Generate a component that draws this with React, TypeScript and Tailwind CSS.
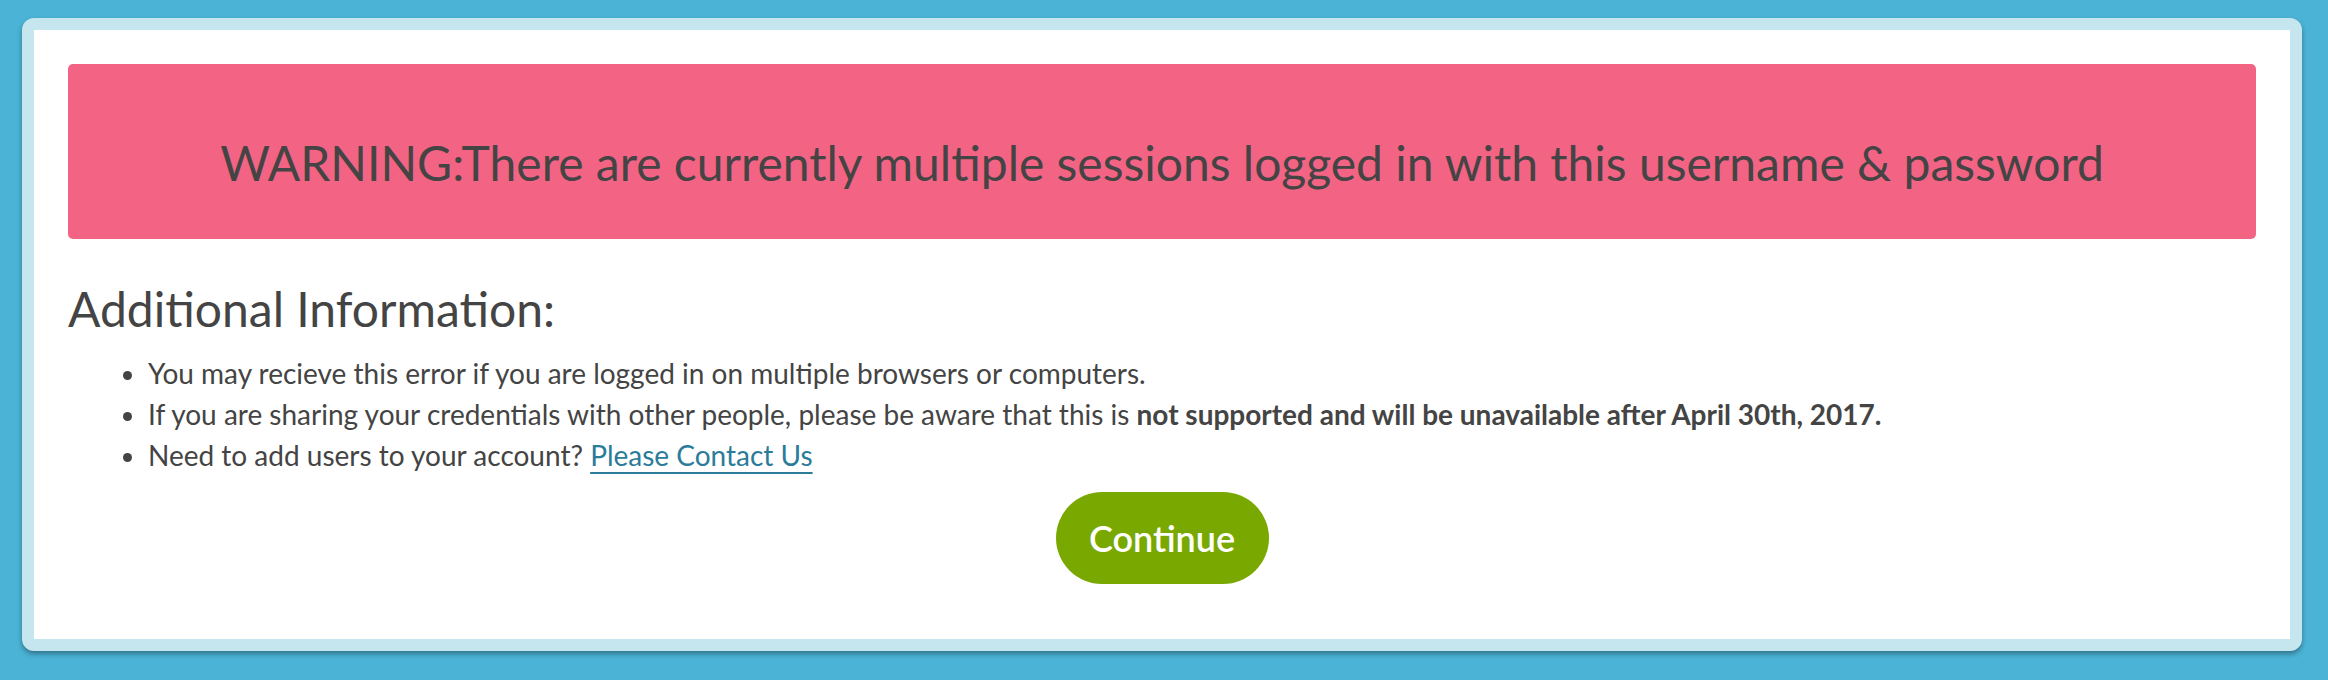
import React from "react";

export default function App() {
  return (
    <div
      className="h-[680px] w-full bg-[#4bb3d6] pt-[18px] pl-[22px] pr-[26px] pb-[29px] flex"
      style={{ fontFamily: "Lato, 'Liberation Sans', sans-serif" }}
    >
      <div className="flex-1 rounded-[12px] border-[12px] border-[#c6e6ef] bg-white px-[34px] pt-[34px] shadow-[0_3px_5px_rgba(0,0,0,0.35)]">
        <div className="h-[175px] rounded-[5px] bg-[#f36384] pt-[23px] flex items-center justify-center">
          <h1 className="text-[48px] leading-none text-[#444444]">
            WARNING:There are currently multiple sessions logged in with this username &amp; password
          </h1>
        </div>
        <h2 className="mt-[42px] text-[48px] leading-[56px] text-[#444444]">Additional Information:</h2>
        <ul className="mt-[16px] list-disc pl-[80px] text-[28px] leading-[41px] text-[#444444]">
          <li>You may recieve this error if you are logged in on multiple browsers or computers.</li>
          <li>
            If you are sharing your credentials with other people, please be aware that this is{" "}
            <strong className="font-bold">not supported and will be unavailable after April 30th, 2017.</strong>
          </li>
          <li>
            Need to add users to your account?{" "}
            <a href="#" className="text-[#2b7b9a] underline underline-offset-[6px] decoration-[2px]">
              Please Contact Us
            </a>
          </li>
        </ul>
        <div className="mt-[16px] flex justify-center">
          <button className="h-[92px] w-[213px] rounded-full bg-[#79a900] text-[36px] font-semibold text-white">
            Continue
          </button>
        </div>
      </div>
    </div>
  );
}
